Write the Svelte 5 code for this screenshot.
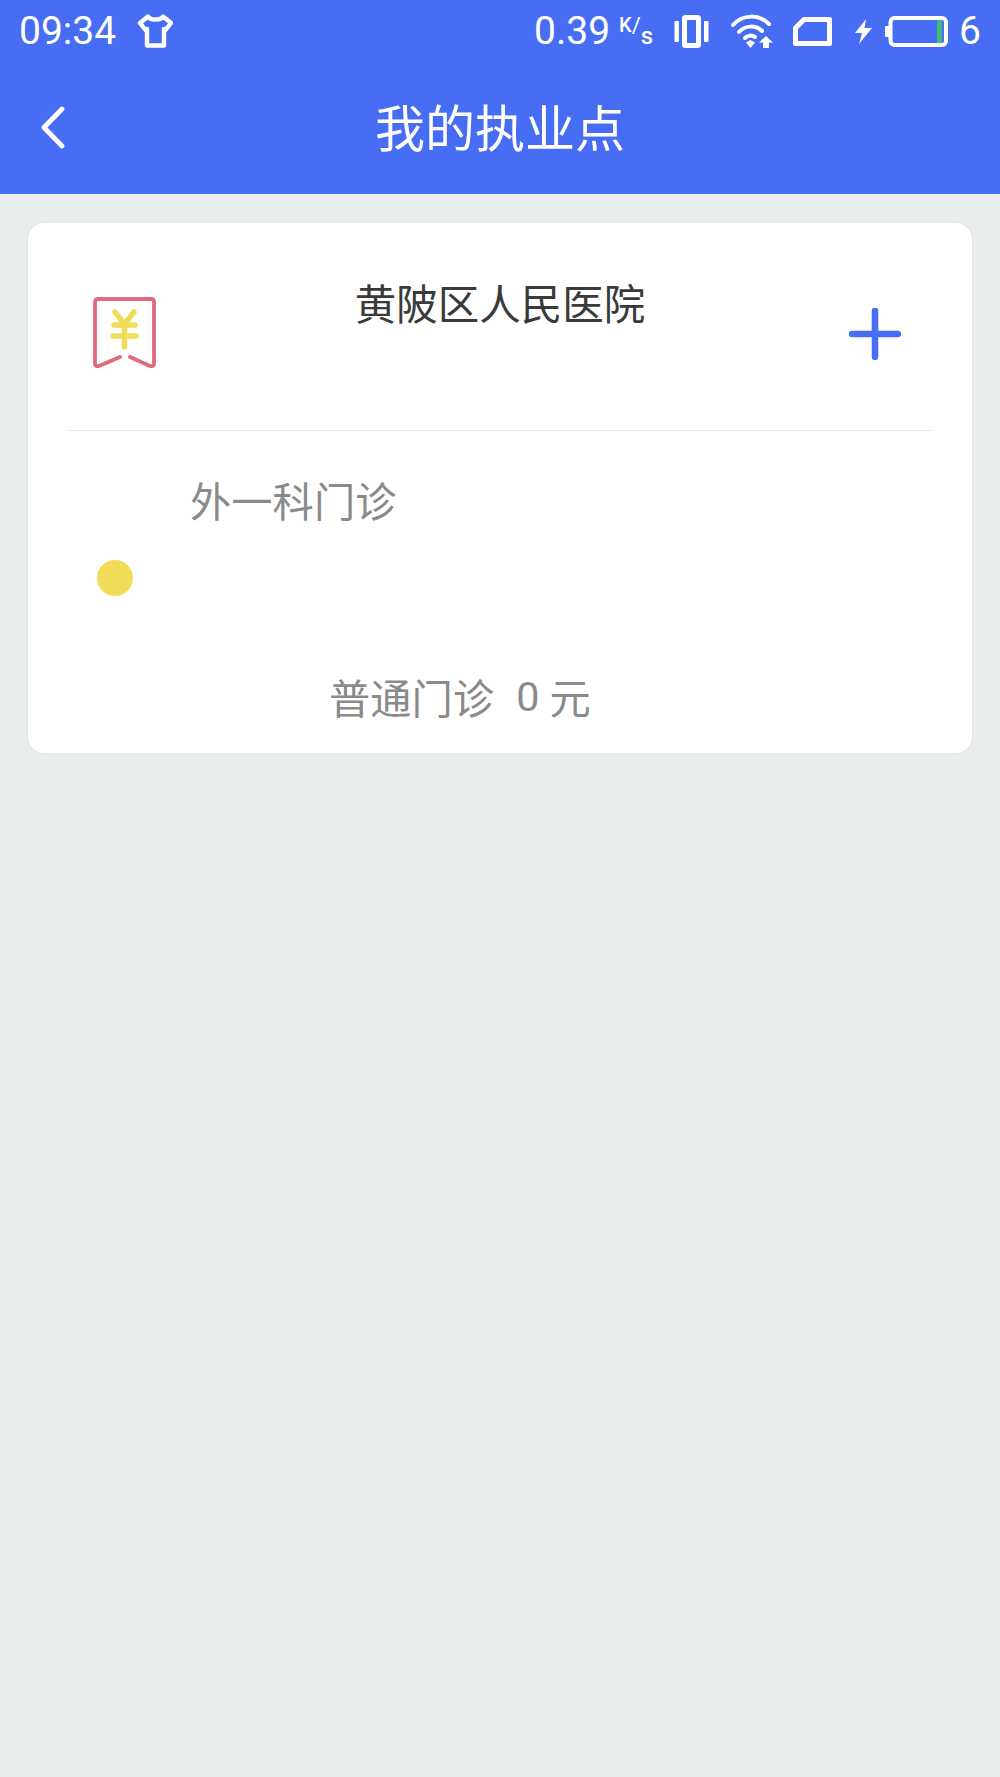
<script>
  const hospital = '黄陂区人民医院';
  const dept = '外一科门诊';
</script>

<div class="page">
  <header class="top">
    <div class="status">
      <span class="time">09:34</span>
      <svg class="shirt" viewBox="0 0 36 34" aria-hidden="true">
        <path d="M11 2.5 L3 9 L8.5 16 L10 15 L10 31.5 L27 31.5 L27 15 L28.5 16 L34 9 L26 2.5 C24 6.5 13 6.5 11 2.5 Z" fill="none" stroke="#fff" stroke-width="4.4" stroke-linejoin="round"/>
      </svg>
      <span class="spacer"></span>
      <span class="speed">0.39</span>
      <span class="unit"><i>K</i>/<b>s</b></span>
      <svg class="vib" viewBox="0 0 35 33" aria-hidden="true">
        <rect x="0.5" y="6" width="4.5" height="21" rx="1" fill="#fff"/>
        <rect x="30" y="6" width="4.5" height="21" rx="1" fill="#fff"/>
        <rect x="10.5" y="2.5" width="14" height="28" rx="1" fill="none" stroke="#fff" stroke-width="5"/>
      </svg>
      <svg class="wifi" viewBox="0 0 42 34" aria-hidden="true">
        <g fill="none" stroke="#fff" stroke-width="4" stroke-linecap="round">
          <path d="M2 11 C12 0 28 0 38 10"/>
          <path d="M8 18 C14 11 25 11 31 17"/>
          <path d="M14 24 C17 21 21 21 24 23"/>
        </g>
        <path d="M15 28.5 L19.5 26 L24 28.5 L19.5 34 Z" fill="#fff"/>
        <path d="M35 22 L42 28.5 L38 28.5 L38 34 L32 34 L32 28.5 L28 28.5 Z" fill="#fff"/>
      </svg>
      <svg class="sim" viewBox="0 0 39 29" aria-hidden="true">
        <path d="M11 2.5 L36.5 2.5 L36.5 26.5 L2.5 26.5 L2.5 11 Z" fill="none" stroke="#fff" stroke-width="5" stroke-linejoin="round"/>
      </svg>
      <svg class="bolt" viewBox="0 0 17 25" aria-hidden="true">
        <path d="M11 0 L0 14 L7 14 L4 25 L17 9 L9.5 9 Z" fill="#fff"/>
      </svg>
      <svg class="batt" viewBox="0 0 63 31" aria-hidden="true">
        <rect x="0" y="10" width="6" height="11" rx="1" fill="#fff"/>
        <rect x="5.5" y="2" width="55.5" height="27" rx="4" fill="none" stroke="#fff" stroke-width="4"/>
        <rect x="52" y="4" width="5" height="23" fill="#3dbb78"/>
      </svg>
      <span class="level">6</span>
    </div>
    <div class="nav">
      <svg class="back" viewBox="0 0 24 43" aria-hidden="true">
        <path d="M21 3 L3 21.5 L21 40" fill="none" stroke="#fff" stroke-width="4.8" stroke-linecap="round" stroke-linejoin="round"/>
      </svg>
      <h1>我的执业点</h1>
    </div>
  </header>

  <main class="card">
    <div class="head">
      <svg class="ticket" viewBox="0 0 63 71" aria-hidden="true">
        <path d="M27 60 L6 69 Q2 70 2 66 L2 5 Q2 2 5 2 L58 2 Q61 2 61 5 L61 66 Q61 70 57 69 L37 60" fill="none" stroke="#e06a7c" stroke-width="3.8" stroke-linecap="round"/>
        <g fill="none" stroke="#f3dc59" stroke-width="5.5" stroke-linecap="round">
          <path d="M22 15 L31.5 27 L41 15"/>
          <path d="M21 28 L42 28"/>
          <path d="M20 39 L43 39"/>
          <path d="M31.5 27 L31.5 50"/>
        </g>
      </svg>
      <div class="hospital">{hospital}</div>
      <svg class="plus" viewBox="0 0 52 52" aria-hidden="true">
        <path d="M26 3 L26 49 M3 26 L49 26" stroke="#476df4" stroke-width="6.5" stroke-linecap="round"/>
      </svg>
    </div>
    <div class="body">
      <div class="dept">{dept}</div>
      <div class="dot"></div>
      <div class="fee"><span>普通门诊</span><span class="amount">0</span><span>元</span></div>
    </div>
  </main>
</div>

<style>
  :global(body) {
    margin: 0;
    background: #e9edee;
  }
  .page {
    min-height: 1777px;
    background: #e9edee;
    font-family: "Noto Sans CJK SC", "Noto Sans", sans-serif;
    font-weight: 300;
  }
  .top {
    height: 194px;
    background: #476df4;
    color: #fff;
    box-sizing: border-box;
  }
  .status {
    display: flex;
    align-items: center;
    height: 62px;
    padding: 0 19px 0 19px;
    font-family: Roboto, sans-serif;
    font-weight: 400;
    box-sizing: border-box;
  }
  .time {
    font-size: 39px;
    line-height: 62px;
    width: 118px;
  }
  .shirt {
    width: 36px;
    height: 34px;
  }
  .spacer {
    flex: 1;
  }
  .speed {
    font-size: 39px;
    line-height: 62px;
  }
  .unit {
    display: flex;
    width: 35px;
    margin-left: 9px;
    margin-right: 20px;
    font-size: 22px;
    align-items: flex-start;
    line-height: 1;
  }
  .unit i, .unit b {
    font-style: normal;
    font-weight: 500;
  }
  .unit i { font-size: 20px; }
  .unit b { margin-top: 9px; font-size: 24px; }
  .vib { width: 35px; height: 33px; margin-right: 22px; }
  .wifi { width: 42px; height: 34px; margin-right: 20px; }
  .sim { width: 39px; height: 29px; margin-right: 23px; }
  .bolt { width: 17px; height: 25px; margin-right: 13px; }
  .batt { width: 63px; height: 31px; margin-right: 11px; }
  .level { font-size: 39px; line-height: 62px; }

  .nav {
    display: flex;
    align-items: center;
    justify-content: center;
    height: 132px;
    position: relative;
  }
  .back {
    position: absolute;
    left: 41px;
    top: 44px;
    width: 24px;
    height: 43px;
  }
  h1 {
    margin: 0 0 7px;
    font-size: 50px;
    font-weight: 400;
    line-height: 1;
  }

  .card {
    margin: 29px 28px 0;
    height: 530px;
    background: #fff;
    border-radius: 16px;
    box-shadow: 0 0 0 1px #e3e7e9;
  }
  .head {
    display: flex;
    align-items: center;
    height: 208px;
    margin: 0 41px;
    padding: 0 30px 0 24px;
    border-bottom: 1px solid #e5e7e9;
    box-sizing: border-box;
  }
  .ticket {
    width: 63px;
    height: 71px;
    margin-top: 12px;
  }
  .hospital {
    flex: 1;
    text-align: center;
    align-self: flex-start;
    margin-top: 52px;
    font-size: 41.5px;
    line-height: 54px;
    color: #3a3a3a;
    margin-right: 5px;
    font-weight: 400;
  }
  .plus {
    width: 52px;
    height: 52px;
    margin-top: 14px;
  }
  .body {
    display: flex;
    flex-direction: column;
    color: #8a8a8a;
    font-size: 41.3px;
    font-weight: 400;
  }
  .dept {
    margin: 41px 0 0 162px;
    line-height: 54px;
  }
  .dot {
    width: 36px;
    height: 36px;
    border-radius: 50%;
    background: #f1dd59;
    margin: 34px 0 0 69px;
  }
  .fee {
    display: flex;
    align-items: center;
    margin: 71px 0 0 301px;
    line-height: 54px;
  }
  .amount {
    margin: 3px 10px 0 22px;
    font-family: Roboto, sans-serif;
    font-weight: 400;
  }
</style>
